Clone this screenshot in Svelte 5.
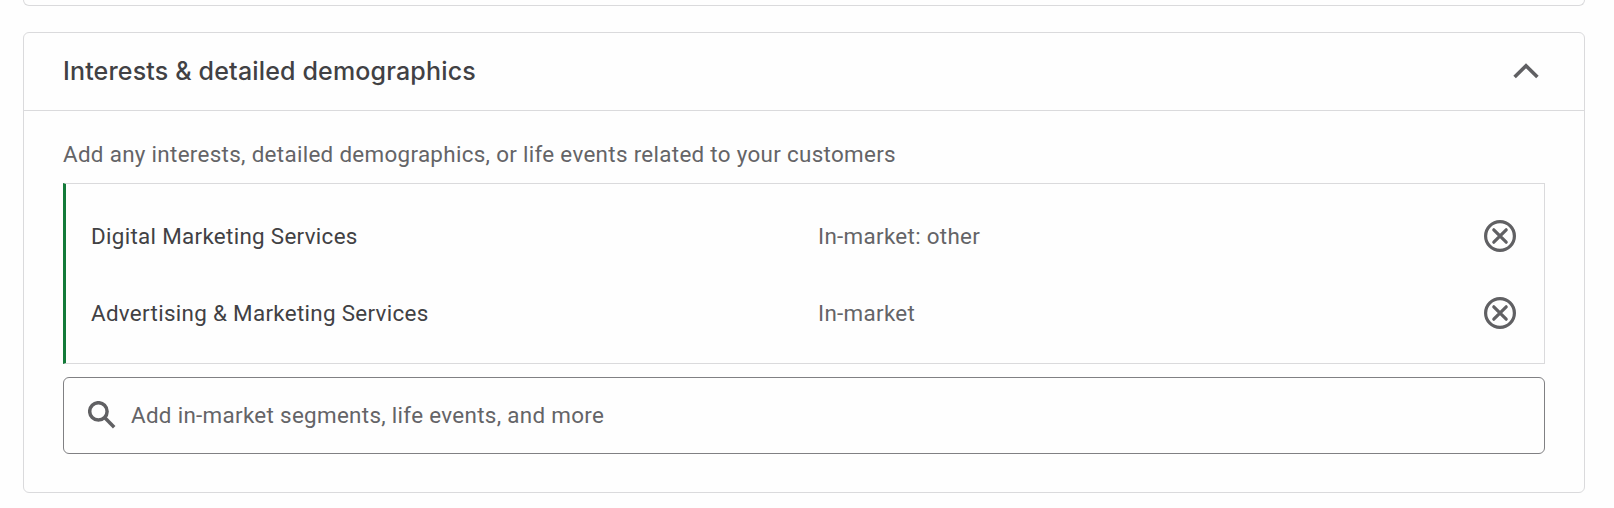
<script lang="ts">
    type Segment = {
        name: string;
        category: string;
    };

    let open = $state(true);
    let query = $state('');
    let segments = $state<Segment[]>([
        { name: 'Digital Marketing Services', category: 'In-market: other' },
        { name: 'Advertising & Marketing Services', category: 'In-market' },
    ]);

    function remove(index: number) {
        segments.splice(index, 1);
    }
</script>

<div class="page">
    <section class="card previous"></section>

    <section class="card">
        <header class="header">
            <h2 class="title">Interests &amp; detailed demographics</h2>
            <button class="icon-button" aria-label="Toggle section" onclick={() => (open = !open)}>
                <svg class="chevron" class:closed={!open} viewBox="0 0 26 16">
                    <path d="M1.6 14L13 2.7 24.4 14" />
                </svg>
            </button>
        </header>

        {#if open}
            <div class="body">
                <p class="description">
                    Add any interests, detailed demographics, or life events related to your customers
                </p>

                <ul class="segments">
                    {#each segments as segment, i}
                        <li class="segment">
                            <span class="name">{segment.name}</span>
                            <span class="category">{segment.category}</span>
                            <button
                                class="icon-button"
                                aria-label={`Remove ${segment.name}`}
                                onclick={() => remove(i)}
                            >
                                <svg class="remove" viewBox="0 0 32 32">
                                    <circle cx="16" cy="16" r="14.4" />
                                    <path d="M9.8 9.8l12.4 12.4M22.2 9.8L9.8 22.2" />
                                </svg>
                            </button>
                        </li>
                    {/each}
                </ul>

                <label class="search">
                    <svg class="magnifier" viewBox="0 0 28 28">
                        <circle cx="10.4" cy="10.4" r="8.7" />
                        <path d="M16.6 16.6l9.6 9.6" />
                    </svg>
                    <input
                        type="text"
                        placeholder="Add in-market segments, life events, and more"
                        bind:value={query}
                    />
                </label>
            </div>
        {/if}
    </section>
</div>

<style>
    :global(body) {
        margin: 0;
        background: #fefefe;
    }

    .page {
        box-sizing: border-box;
        height: 508px;
        padding: 0 29px 0 23px;
        overflow: hidden;
        background: #fefefe;
        color: #414144;
        font-family: Roboto, sans-serif;
        font-size: 22.4px;
        letter-spacing: 0.31px;
    }

    .card {
        box-sizing: border-box;
        border: 1px solid #dadadc;
        border-radius: 6px;
    }

    .card.previous {
        height: 6px;
        margin-bottom: 26px;
        border-top: 0;
        border-radius: 0 0 6px 6px;
    }

    .header {
        display: flex;
        align-items: center;
        justify-content: space-between;
        height: 77px;
        padding: 0 45px 0 39px;
        border-bottom: 1px solid #dadadc;
    }

    .title {
        margin: 0 0 2px;
        font-family: 'Google Sans', Inter, sans-serif;
        font-size: 25px;
        font-weight: 500;
        letter-spacing: 0.17px;
    }

    .icon-button {
        display: flex;
        padding: 0;
        border: 0;
        background: none;
        cursor: pointer;
    }

    .chevron {
        width: 26px;
        height: 16px;
        margin-bottom: 2px;
        fill: none;
        stroke: #606063;
        stroke-width: 3.6;
    }

    .chevron.closed {
        transform: rotate(180deg);
    }

    .body {
        padding: 27px 39px 38px;
    }

    .description {
        margin: 0 0 13px;
        line-height: 32px;
        color: #646467;
    }

    .segments {
        box-sizing: border-box;
        height: 181px;
        margin: 0 0 13px;
        padding: 13px 28px 0 25px;
        border: 1px solid #dadadc;
        border-left: 3px solid #137a39;
        list-style: none;
    }

    .segment {
        display: grid;
        grid-template-columns: 727px 1fr auto;
        align-items: center;
        height: 77px;
    }

    .category {
        color: #646467;
    }

    .remove {
        width: 32px;
        height: 32px;
        fill: none;
        stroke: #606063;
        stroke-width: 3.2;
        stroke-linecap: round;
    }

    .search {
        box-sizing: border-box;
        display: flex;
        align-items: center;
        gap: 15px;
        height: 77px;
        padding: 0 24px 0 24px;
        border: 1px solid #808083;
        border-radius: 6px;
    }

    .magnifier {
        flex: none;
        width: 28px;
        height: 28px;
        margin-bottom: 2px;
        fill: none;
        stroke: #606063;
        stroke-width: 3.5;
    }

    input {
        flex: 1;
        padding: 0 0 2px;
        border: 0;
        outline: none;
        background: none;
        color: inherit;
        font: inherit;
        letter-spacing: inherit;
    }

    input::placeholder {
        color: #646467;
        opacity: 1;
    }
</style>
